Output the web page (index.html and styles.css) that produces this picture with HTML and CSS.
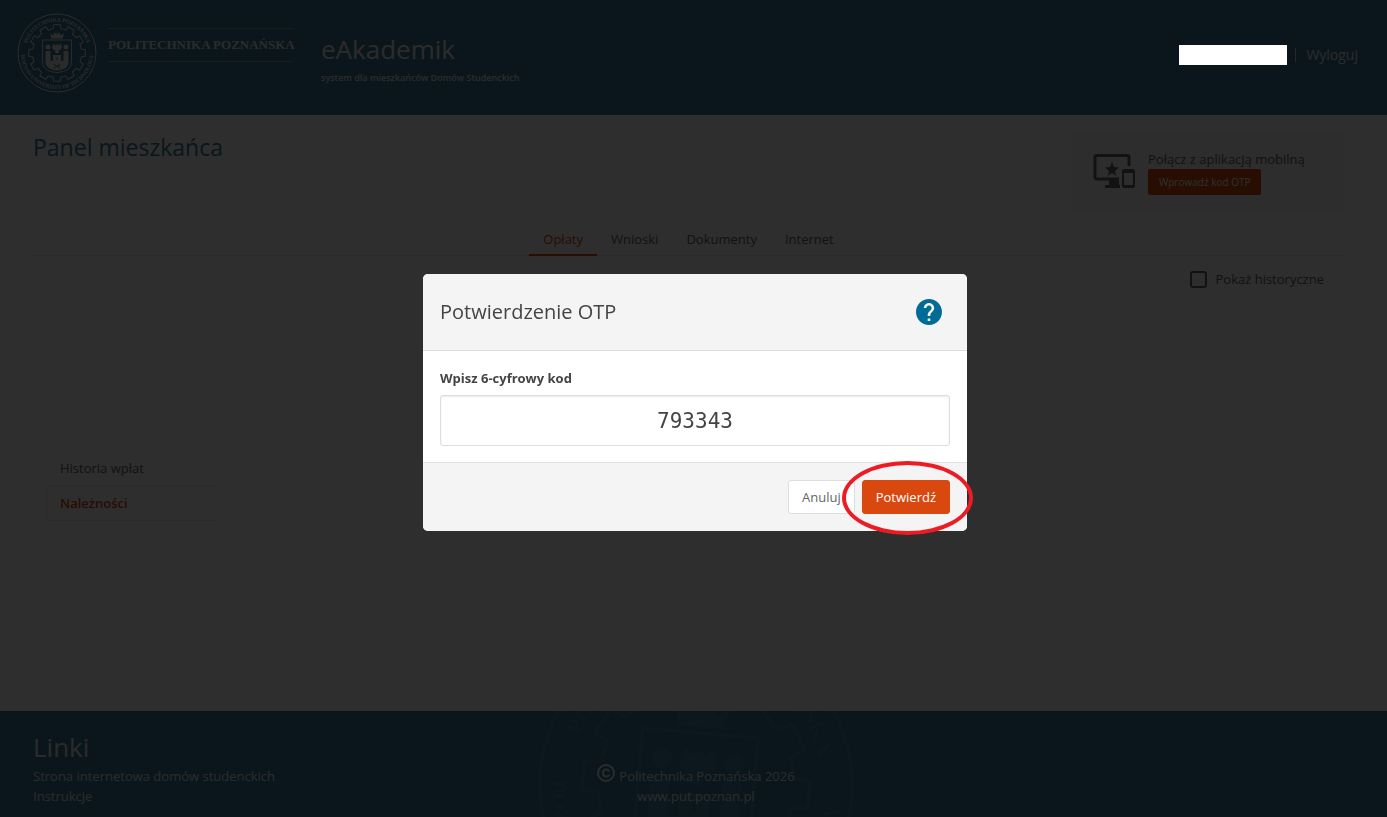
FILE: index.html
```
<!DOCTYPE html>
<html lang="pl">
<head>
  <meta charset="UTF-8">
  <meta name="viewport" content="width=device-width, initial-scale=1">
  <title>eAkademik</title>
  <link rel="stylesheet" href="styles.css">
</head>
<body>

<!-- university seal, used in the header and the footer -->
<svg class="defs" width="0" height="0" aria-hidden="true">
  <defs>
    <path id="arcTop" d="M17 80a63 63 0 0 1 126 0"/>
    <path id="arcBottom" d="M8 71A72.5 72.5 0 1 0 152 71"/>
    <path id="tooth" d="M72.3 31.6l.8-8.2h13.8l.8 8.2q5 .8 9.900 2.700"/>
    <symbol id="seal" viewBox="0 0 160 160">
      <g fill="none" stroke="currentColor" stroke-width="2">
        <circle cx="80" cy="80" r="78"/>
        <use href="#tooth"/>
        <use href="#tooth" transform="rotate(30 80 80)"/>
        <use href="#tooth" transform="rotate(60 80 80)"/>
        <use href="#tooth" transform="rotate(90 80 80)"/>
        <use href="#tooth" transform="rotate(120 80 80)"/>
        <use href="#tooth" transform="rotate(150 80 80)"/>
        <use href="#tooth" transform="rotate(180 80 80)"/>
        <use href="#tooth" transform="rotate(210 80 80)"/>
        <use href="#tooth" transform="rotate(240 80 80)"/>
        <use href="#tooth" transform="rotate(270 80 80)"/>
        <use href="#tooth" transform="rotate(300 80 80)"/>
        <use href="#tooth" transform="rotate(330 80 80)"/>
        <path d="M51 54h58v42q0 22-29 23q-29-1-29-23z"/>
      </g>
      <g fill="currentColor">
        <path d="M69 51l-3-10 7 4 2-7 4 5 1-9 1 9 4-5 2 7 7-4-3 10z"/>
        <path d="M73 61l4 4 3-3 3 3 4-4 3 8-4 6-3-1 1 5-4 2-4-2 1-5-3 1-4-6z"/>
        <circle cx="62" cy="68" r="5"/>
        <circle cx="98" cy="68" r="5"/>
        <path d="M57 76h10v20h5V84h16v12h5V76h10v24q-2 14-23 15q-21-1-23-15z"/>
      </g>
      <g fill="none" stroke="#377a9c" stroke-width="2">
        <path d="M73 102l14 9M87 102l-14 9M80 88v6"/>
      </g>
      <g class="seal-text" fill="currentColor" text-anchor="middle">
        <text><textPath href="#arcTop" startOffset="50%">POLITECHNIKA POZNAŃSKA</textPath></text>
        <text><textPath href="#arcBottom" startOffset="50%">POZNAN UNIVERSITY OF TECHNOLOGY</textPath></text>
      </g>
    </symbol>
  </defs>
</svg>

<header class="top">
  <svg class="logo" aria-hidden="true"><use href="#seal"/></svg>
  <div class="wordmark">POLITECHNIKA POZNAŃSKA</div>
  <div class="brand">
    <div class="brand-name">eAkademik</div>
    <div class="brand-sub">system dla mieszkańców Domów Studenckich</div>
  </div>
  <div class="user">
    <span class="user-name"></span>
    <span class="divider"></span>
    <a href="#">Wyloguj</a>
  </div>
</header>

<main>
  <div class="title-row">
    <h1>Panel mieszkańca</h1>
    <section class="mobile">
      <svg class="devices" viewBox="0 0 42 36" aria-hidden="true">
        <path d="M36 12V3a1.500 1.500 0 0 0-1.500-1.500h-31A1.500 1.500 0 0 0 2 3v20.500a1.500 1.500 0 0 0 1.500 1.500H26" fill="none" stroke="currentColor" stroke-width="3"/>
        <path d="M16 25h10v6h1v3H12v-3h4z"/>
        <path d="M19 8l2 5 5 .5-4 3.500 1.300 5L19 19l-4.300 3 1.300-5-4-3.500 5-.5z"/>
        <path d="M31 15h9a2 2 0 0 1 2 2v15a2 2 0 0 1-2 2h-9a2 2 0 0 1-2-2V17a2 2 0 0 1 2-2zm0 4v12h9V19z" fill-rule="evenodd"/>
      </svg>
      <div>
        <div class="mobile-label">Połącz z aplikacją mobilną</div>
        <button type="button" class="btn-small">Wprowadź kod OTP</button>
      </div>
    </section>
  </div>

  <nav class="tabs">
    <a href="#" class="active">Opłaty</a>
    <a href="#">Wnioski</a>
    <a href="#">Dokumenty</a>
    <a href="#">Internet</a>
  </nav>

  <label class="history"><input type="checkbox"> Pokaż historyczne</label>

  <nav class="side">
    <a href="#">Historia wpłat</a>
    <a href="#" class="active">Należności</a>
  </nav>
</main>

<footer class="bottom">
  <svg class="watermark" aria-hidden="true"><use href="#seal"/></svg>
  <div class="links">
    <h2>Linki</h2>
    <a href="#">Strona internetowa domów studenckich</a>
    <a href="#">Instrukcje</a>
  </div>
  <div class="copy">
    <div class="copy-line">
      <svg viewBox="0 0 18 18" aria-hidden="true"><g fill="none" stroke="currentColor" stroke-width="2"><circle cx="9" cy="9" r="8"/><path d="M12 7.500Q11.500 5.500 9 5.500Q6 5.500 6 9T9 12.500Q11.500 12.500 12 10.500"/></g></svg>
      <span>Politechnika Poznańska 2026</span>
    </div>
    <a href="#">www.put.poznan.pl</a>
  </div>
</footer>

<div class="backdrop">
  <form class="modal" role="dialog" aria-labelledby="otpTitle">
    <div class="modal-head">
      <h3 id="otpTitle">Potwierdzenie OTP</h3>
      <button type="button" class="help" aria-label="Pomoc">
        <svg viewBox="2 2 20 20"><path fill="currentColor" d="M12 2C6.480 2 2 6.480 2 12s4.480 10 10 10 10-4.480 10-10S17.520 2 12 2zm1 17h-2v-2h2v2zm2.070-7.750l-.9.920C13.450 12.900 13 13.500 13 15h-2v-.5c0-1.100.45-2.100 1.170-2.830l1.240-1.260c.37-.36.59-.86.59-1.410 0-1.100-.9-2-2-2s-2 .9-2 2H8c0-2.210 1.790-4 4-4s4 1.790 4 4c0 .88-.36 1.680-.93 2.250z"/></svg>
      </button>
    </div>
    <div class="modal-body">
      <label for="otp">Wpisz 6-cyfrowy kod</label>
      <input type="text" id="otp" value="793343" maxlength="6" inputmode="numeric">
    </div>
    <div class="modal-foot">
      <button type="button" class="btn">Anuluj</button>
      <div class="marked">
        <button type="submit" class="btn btn-primary">Potwierdź</button>
        <span class="ring"></span>
      </div>
    </div>
  </form>
</div>

</body>
</html>
```

FILE: styles.css
```
* {
  box-sizing: border-box;
}

body {
  margin: 0;
  min-height: 100vh;
  display: flex;
  flex-direction: column;
  font-family: "Open Sans", "Noto Sans", sans-serif;
  font-size: 13px;
  line-height: 20px;
  color: #666;
  background: #fff;
}

h1, h2, h3 {
  margin: 0;
  font-weight: 400;
}

a {
  color: inherit;
  text-decoration: none;
}

button, input {
  font-family: inherit;
}

.defs {
  position: absolute;
}

.seal-text {
  font: bold 11px "Liberation Serif", serif;
}

/* header */
.top {
  display: flex;
  align-items: flex-start;
  height: 115px;
  padding: 13px 29px 0 17px;
  background: #377a9c;
  color: #eee;
}

.logo {
  width: 80px;
  height: 80px;
  color: #eee;
}

.wordmark {
  width: 185px;
  margin: 15px 28px 0 11px;
  padding: 6px 0;
  border-top: 1px solid #8aa;
  border-bottom: 1px solid #8aa;
  font: bold 13px/20px "Liberation Serif", serif;
  white-space: nowrap;
}

.brand {
  padding-top: 20px;
}

.brand-name {
  font-size: 26px;
  line-height: 32px;
}

.brand-sub {
  margin-top: 3px;
  font-size: 9px;
  font-weight: 600;
}

.user {
  display: flex;
  align-items: center;
  margin: 32px 0 0 auto;
}

.user-name {
  position: relative;
  z-index: 20;
  width: 108px;
  height: 20px;
  background: #fff;
}

.divider {
  width: 1px;
  height: 14px;
  margin: 0 10px 0 8px;
  background: #ddd;
}

.user a {
  font-size: 14px;
}

/* content */
main {
  flex: 1;
  padding: 17px 43px 0 33px;
}

.title-row {
  display: flex;
  justify-content: space-between;
  align-items: flex-start;
}

h1 {
  font-size: 23px;
  line-height: 30px;
  color: #377a9c;
}

.mobile {
  display: flex;
  align-items: center;
  gap: 13px;
  width: 272px;
  height: 80px;
  padding: 0 21px;
  background: #f8f8f8;
}

.devices {
  width: 42px;
  height: 36px;
  fill: currentColor;
}

.mobile-label {
  line-height: 19px;
}

.btn-small {
  display: block;
  height: 26px;
  padding: 0 11px;
  border: 0;
  border-radius: 2px;
  background: #d9480f;
  color: #fff;
  font-size: 10px;
}

.tabs {
  display: flex;
  justify-content: center;
  height: 44px;
  border-bottom: 1px solid #e8e8e8;
}

.tabs a {
  height: 44px;
  padding: 17px 14px 0;
}

.tabs .active {
  border-bottom: 2px solid #d9480f;
}

.active {
  color: #d9480f;
}

.history {
  display: flex;
  justify-content: flex-end;
  align-items: center;
  gap: 9px;
  margin: 13px 20px 0 0;
}

.history input {
  appearance: none;
  width: 17px;
  height: 17px;
  margin: 0;
  border: 2px solid #666;
  border-radius: 3px;
}

.side {
  width: 170px;
  margin: 161px 0 0 13px;
}

.side a {
  display: block;
  padding: 7px 13px;
  border: 1px solid transparent;
  border-right: 0;
}

.side .active {
  margin-top: -1px;
  border-color: #e8e8e8;
  border-radius: 3px 0 0 3px;
  font-weight: 600;
}

/* footer */
.bottom {
  position: relative;
  display: grid;
  grid-template-columns: 1fr auto 1fr;
  height: 106px;
  padding: 20px 28px 0 33px;
  overflow: hidden;
  background: #377a9c;
  color: #eee;
}

.watermark {
  position: absolute;
  top: -86px;
  left: 50%;
  width: 320px;
  height: 320px;
  margin-left: -158px;
  color: #46839f;
  transform: rotate(5deg);
}

.links {
  display: flex;
  flex-direction: column;
}

.bottom h2 {
  font-size: 26px;
  line-height: 32px;
  margin-bottom: 3px;
}

.copy {
  position: relative;
  padding-top: 35px;
  text-align: center;
}

.copy-line {
  display: flex;
  gap: 4px;
}

.copy-line svg {
  width: 18px;
  height: 18px;
  margin-top: -2px;
}

/* OTP dialog */
.backdrop {
  position: fixed;
  inset: 0;
  z-index: 10;
  display: flex;
  justify-content: center;
  align-items: center;
  padding: 0 0 12px 3px;
  background: rgba(0, 0, 0, 0.82);
}

.modal {
  width: 544px;
  border-radius: 5px;
  background: #fff;
  color: #444;
}

.modal-head {
  display: flex;
  justify-content: space-between;
  align-items: center;
  height: 77px;
  padding: 0 25px 0 17px;
  border-bottom: 1px solid #ddd;
  border-radius: 5px 5px 0 0;
  background: #f4f4f4;
}

.modal-head h3 {
  font-size: 20px;
  line-height: 28px;
}

.help {
  width: 26px;
  height: 26px;
  padding: 0;
  border: 0;
  background: none;
  color: #006b94;
}

.help svg {
  display: block;
}

.modal-body {
  padding: 17px 17px 16px;
}

.modal-body label {
  display: block;
  margin-bottom: 7px;
  font-weight: 700;
}

.modal-body input {
  display: block;
  width: 100%;
  height: 51px;
  border: 1px solid #ddd;
  border-radius: 3px;
  box-shadow: inset 0 1px 2px rgba(0, 0, 0, 0.08);
  color: #444;
  font-family: "DejaVu Sans Mono", monospace;
  font-size: 21px;
  text-align: center;
}

.modal-foot {
  display: flex;
  justify-content: flex-end;
  gap: 7px;
  padding: 17px;
  border-top: 1px solid #e2e2e2;
  border-radius: 0 0 5px 5px;
  background: #f4f4f4;
}

.btn {
  height: 34px;
  padding: 0 13px;
  border: 1px solid #ddd;
  border-radius: 3px;
  background: #fff;
  color: #666;
  font-size: 13px;
}

.btn-primary {
  border-color: #d9480f;
  background: #d9480f;
  color: #fff;
}

.marked {
  position: relative;
}

.ring {
  position: absolute;
  inset: -19px -23px -21px -20px;
  border: 4px solid #ed1c24;
  border-radius: 50%;
  pointer-events: none;
}
```
